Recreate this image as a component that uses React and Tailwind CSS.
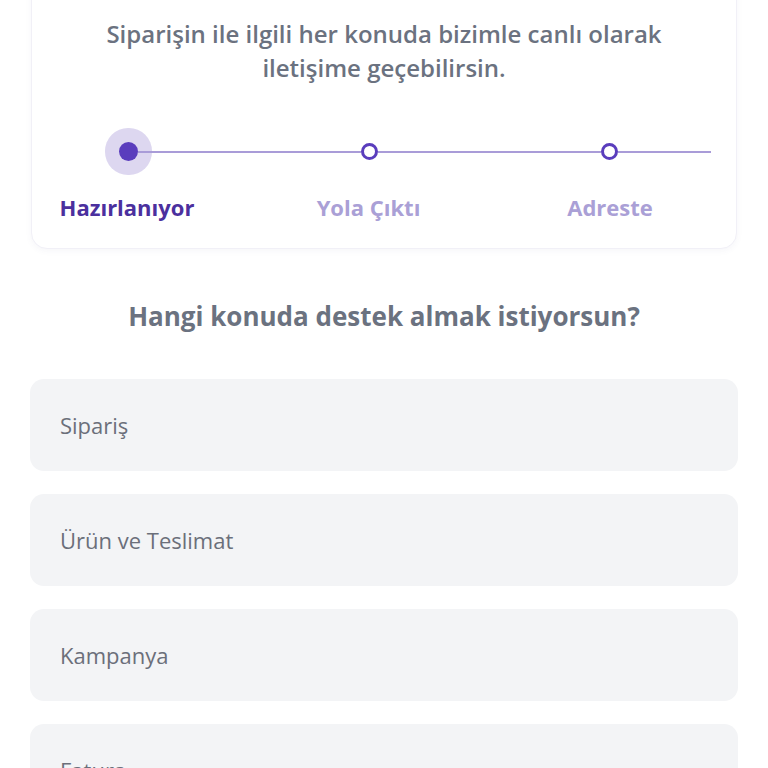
import React from "react";

const topics = ["Sipariş", "Ürün ve Teslimat", "Kampanya", "Fatura"];

const steps = [
  { label: "Hazırlanıyor", active: true },
  { label: "Yola Çıktı", active: false },
  { label: "Adreste", active: false },
];

const App = () => {
  return (
    <div
      className="min-h-screen bg-white px-[30px] overflow-hidden"
      style={{ fontFamily: '"Open Sans", "Noto Sans", sans-serif' }}
    >
      {/* Order status card */}
      <div className="-mt-[20px] mx-[1px] rounded-2xl border border-[#f1f0f7] bg-white pt-[36px] pb-[27px] shadow-[0_2px_6px_rgba(80,70,140,0.05)]">
        <p className="text-center text-[24px] leading-[34px] font-semibold text-[#6b7280]">
          Siparişin ile ilgili her konuda bizimle canlı olarak
          <br />
          iletişime geçebilirsin.
        </p>

        {/* Stepper */}
        <div className="mt-[57px] ml-[15px] w-[664px]">
          <div className="flex items-center pl-[72px] h-[19px]">
            <div className="w-[19px] h-[19px] shrink-0 rounded-full bg-[#5a3dbd] shadow-[0_0_0_14px_#ddd7f0]" />
            <div className="flex-1 h-[2px] bg-[#a99cd8]" />
            <div className="w-[17px] h-[17px] shrink-0 rounded-full border-[3.5px] border-[#5a3dbd] bg-white" />
            <div className="flex-1 h-[2px] bg-[#a99cd8]" />
            <div className="w-[17px] h-[17px] shrink-0 rounded-full border-[3.5px] border-[#5a3dbd] bg-white" />
            <div className="w-[93px] h-[2px] bg-[#a99cd8]" />
          </div>
          <div className="mt-[32px] w-[643px] flex justify-between">
            {steps.map((s) => (
              <div
                key={s.label}
                className={
                  "w-[160px] text-center text-[22px] leading-[28px] font-bold whitespace-nowrap " +
                  (s.active ? "text-[#4b309e]" : "text-[#aaa0d6]")
                }
              >
                {s.label}
              </div>
            ))}
          </div>
        </div>
      </div>

      <h2 className="mt-[51px] text-center text-[26px] leading-[32px] font-bold text-[#6b7280]">
        Hangi konuda destek almak istiyorsun?
      </h2>

      <div className="mt-[47px] flex flex-col gap-[23px]">
        {topics.map((t) => (
          <button
            key={t}
            className="h-[92px] w-full rounded-[14px] bg-[#f3f4f6] px-[30px] text-left text-[22px] text-[#6b6f7a]"
          >
            {t}
          </button>
        ))}
      </div>
    </div>
  );
};

export default App;
